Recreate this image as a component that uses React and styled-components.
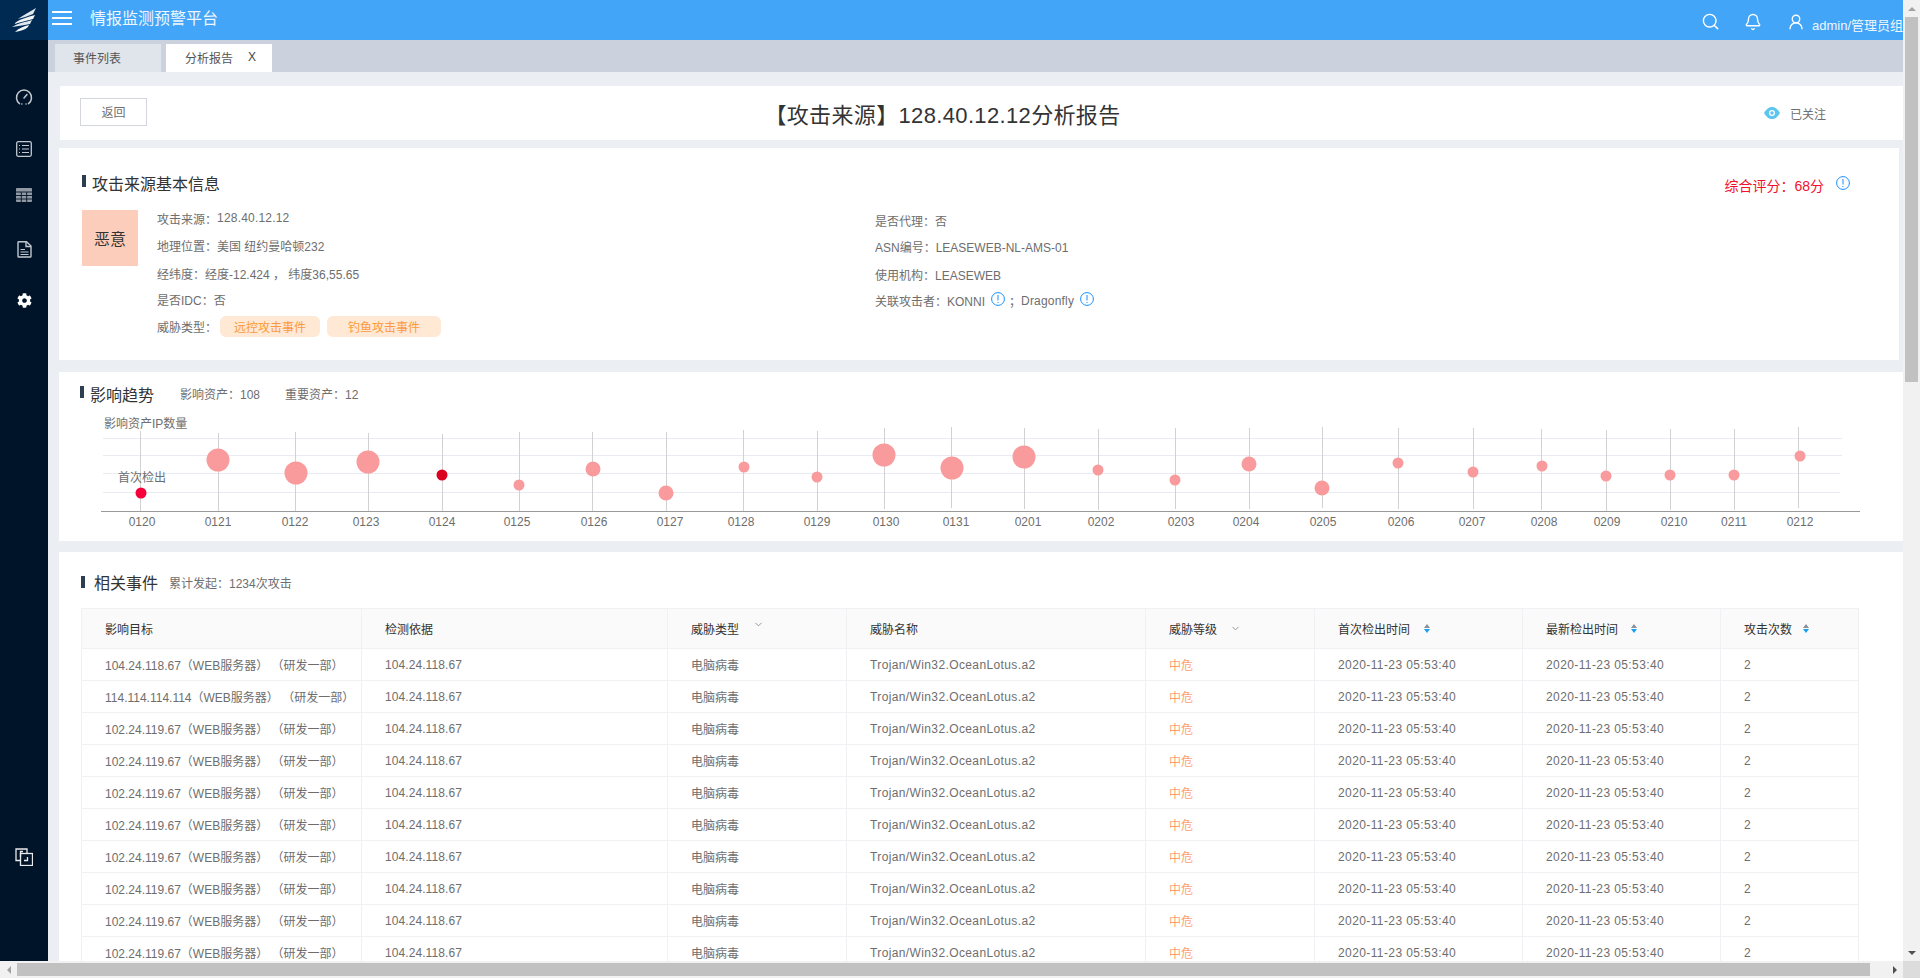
import React from "react";
import styled, { createGlobalStyle } from "styled-components";
import { FaCog } from "react-icons/fa";
import { Bell, ChevronDown, Search, UserRound } from "lucide-react";

const GlobalStyle = createGlobalStyle`
  html, body { margin: 0; height: 100%; overflow: hidden; }
  body {
    font-family: "Liberation Sans", "Noto Sans CJK SC", sans-serif;
    font-size: 12px;
    color: #6e6e6e;
  }
  * { box-sizing: border-box; }
`;

const Shell = styled.div`
  display: grid;
  grid-template-columns: 1fr 17px;
  grid-template-rows: 1fr 17px;
  width: 1920px;
  height: 978px;
  overflow: hidden;
`;
const Viewport = styled.div`
  display: flex;
  min-width: 0;
  min-height: 0;
  overflow: hidden;
`;

const Sidebar = styled.aside`
  flex: 0 0 48px;
  display: flex;
  flex-direction: column;
  align-items: center;
  background: #001429;
`;
const LogoBox = styled.div`
  width: 48px;
  height: 40px;
  flex: none;
  display: flex;
  align-items: center;
  justify-content: center;
  background: #012a52;
`;
const SideItem = styled.div`
  height: ${(p) => p.$h}px;
  flex: none;
  display: flex;
  align-items: flex-end;
  color: #c3c8ce;
`;

const Main = styled.div`
  flex: 1;
  min-width: 0;
  display: flex;
  flex-direction: column;
  background: #ebeef3;
`;
const Header = styled.header`
  height: 40px;
  flex: none;
  display: flex;
  align-items: center;
  padding-left: 4px;
  background: #42a5f8;
  color: #fff;
`;
const Burger = styled.div`
  width: 20px;
  height: 14px;
  margin-top: -4px;
  border-top: 2px solid #fff;
  border-bottom: 2px solid #fff;
  position: relative;
  &::after {
    content: "";
    position: absolute;
    left: 0;
    right: 0;
    top: 4px;
    height: 2px;
    background: #fff;
  }
`;
const AppTitle = styled.div`
  margin: -6px 0 0 18px;
  font-size: 16px;
  color: #eef6fe;
`;
const HeaderRight = styled.div`
  margin-left: auto;
  display: flex;
  align-items: center;
  margin-top: 3px;
`;
const HeadIcon = styled.span`
  display: flex;
  margin-left: ${(p) => p.$ml}px;
`;
const UserName = styled.span`
  margin: 5px 0 0 7px;
  font-size: 13px;
  color: #eef6fe;
  white-space: nowrap;
`;

const TabBar = styled.div`
  height: 32px;
  flex: none;
  display: flex;
  align-items: flex-end;
  gap: 5px;
  padding-left: 7px;
  background: #cbd2de;
`;
const Tab = styled.div`
  width: 106px;
  height: 28px;
  display: flex;
  align-items: center;
  padding: 0 0 2px ${(p) => (p.$active ? 19 : 18)}px;
  background: ${(p) => (p.$active ? "#fff" : "#e0e4eb")};
  color: #555;
`;
const TabClose = styled.span`
  margin-left: 15px;
  color: #444;
`;

const Content = styled.div`
  flex: 1;
  min-height: 0;
  overflow: hidden;
  padding: 14px 0 0 12px;
`;
const TitleCard = styled.section`
  height: 54px;
  display: flex;
  align-items: center;
  padding: 0 77px 0 20px;
  background: #fff;
`;
const BackButton = styled.button`
  width: 67px;
  height: 28px;
  margin-top: -2px;
  padding: 0 0 2px;
  border: 1px solid #d3d6db;
  background: #fff;
  color: #6e6e6e;
  font: inherit;
`;
const ReportTitle = styled.h1`
  flex: 1;
  margin: 0;
  padding-right: 26px;
  text-align: center;
  font-size: 22px;
  font-weight: 400;
  letter-spacing: 0.35px;
  color: #333;
`;
const Followed = styled.div`
  display: flex;
  align-items: center;
  gap: 10px;
`;

const InfoCard = styled.section`
  height: 212px;
  margin: 8px 4px 0 -1px;
  background: #fff;
`;
const InfoHead = styled.div`
  display: flex;
  align-items: flex-start;
  padding: 27px 49px 0 23px;
`;
const Marker = styled.i`
  flex: none;
  width: 4px;
  height: 12px;
  margin-top: ${(p) => p.$top}px;
  background: #2c3e50;
`;
const SectionTitle = styled.h2`
  margin: 0 0 0 ${(p) => p.$gap}px;
  font-size: 16px;
  line-height: 20px;
  font-weight: 400;
  color: #333;
  white-space: nowrap;
`;
const Score = styled.div`
  margin-left: auto;
  display: flex;
  align-items: flex-start;
  gap: 12px;
  font-size: 14px;
  line-height: 20px;
  padding-top: 1px;
  color: #f2102c;
`;
const ScoreIcon = styled.span`
  display: flex;
`;
const InfoBody = styled.div`
  display: grid;
  grid-template-columns: 56px 718px 1fr;
  column-gap: 19px;
  margin-top: 7px;
  padding-left: 23px;
`;
const Level = styled.div`
  width: 56px;
  height: 56px;
  margin-top: 7px;
  display: flex;
  align-items: center;
  justify-content: center;
  background: #fdcdbb;
  color: #333;
  font-size: 16px;
`;
const InfoCol = styled.div`
  padding-top: ${(p) => p.$top}px;
  margin-left: ${(p) => p.$ml || 0}px;
`;
const InfoRow = styled.div`
  height: ${(p) => p.$h}px;
  display: flex;
  align-items: center;
  white-space: nowrap;
`;
const Num = styled.span`
  letter-spacing: 0.2px;
`;
const Tag = styled.span`
  height: 21px;
  display: inline-flex;
  align-items: center;
  justify-content: center;
  width: ${(p) => p.$w}px;
  margin-left: ${(p) => p.$ml}px;
  border-radius: 6px;
  background: #ffe8d4;
  color: #fb9a3c;
`;
const InlineIcon = styled.span`
  display: flex;
  margin: -4px ${(p) => p.$mr}px 0 6px;
`;

const TrendCard = styled.section`
  height: 169px;
  margin: 12px 0 0 -1px;
  background: #fff;
`;
const TrendHead = styled.div`
  display: flex;
  align-items: flex-start;
  padding: 14px 0 0 21px;
  margin-bottom: -1px;
`;
const HeadNote = styled.span`
  margin: ${(p) => p.$top || 0}px 0 0 ${(p) => p.$ml}px;
  line-height: 18px;
  white-space: nowrap;
`;
const ChartSvg = styled.svg`
  display: block;
  width: 1844px;
  height: 136px;
  font-family: "Liberation Sans", "Noto Sans CJK SC", sans-serif;
  font-size: 12px;
`;

const EventsCard = styled.section`
  margin: 11px 0 0 -1px;
  background: #fff;
`;
const EventsHead = styled.div`
  display: flex;
  align-items: flex-start;
  height: 42px;
  padding: 22px 0 0 22px;
`;
const TableWrap = styled.div`
  margin: 14px 0 0 22px;
`;
const Table = styled.table`
  width: 1777px;
  table-layout: fixed;
  border-collapse: collapse;
`;
const Th = styled.th`
  height: 40px;
  padding: 0 0 0 23px;
  border: 1px solid #f0f0f5;
  background: #fafafa;
  color: #333;
  font-weight: 400;
  text-align: left;
  white-space: nowrap;
`;
const Td = styled.td`
  height: 32px;
  padding: 0 0 0 23px;
  border: 1px solid #f0f0f5;
  color: ${(p) => p.$color || "#6e6e6e"};
  letter-spacing: ${(p) => p.$ls || 0}px;
  white-space: nowrap;
`;
const HeadInner = styled.span`
  display: inline-flex;
  align-items: center;
`;
const Chevron = styled.span`
  display: flex;
  color: #8a8f99;
  margin: ${(p) => (p.$up ? "-9px 0 0 14px" : "0 0 0 13px")};
`;
const Sort = styled.span`
  display: inline-flex;
  flex-direction: column;
  gap: 1px;
  margin-left: ${(p) => p.$ml}px;
  &::before, &::after {
    content: "";
    border-left: 3px solid transparent;
    border-right: 3px solid transparent;
  }
  &::before { border-bottom: 4px solid #8a8f99; }
  &::after { border-top: 4px solid #1aa0f0; }
`;

const VBar = styled.div`
  display: flex;
  flex-direction: column;
  background: #f1f1f1;
`;
const HBar = styled.div`
  display: flex;
  background: #f1f1f1;
`;
const Corner = styled.div`
  background: #dcdcdc;
`;
const ArrowBox = styled.div`
  flex: 0 0 17px;
  display: flex;
  align-items: center;
  justify-content: center;
`;
const Arrow = styled.i`
  width: 0;
  height: 0;
  border-style: solid;
  border-color: transparent;
  ${(p) => p.$dir === "up" && "border-width: 0 4px 4px; border-bottom-color: #a3a3a3;"}
  ${(p) => p.$dir === "down" && "border-width: 4px 4px 0; border-top-color: #505050;"}
  ${(p) => p.$dir === "left" && "border-width: 4px 4px 4px 0; border-right-color: #a3a3a3;"}
  ${(p) => p.$dir === "right" && "border-width: 4px 0 4px 4px; border-left-color: #505050;"}
`;
const VThumb = styled.div`
  height: 365px;
  margin: 0 2px;
  background: #c1c1c1;
`;
const VRest = styled.div`
  flex: 1;
`;
const HThumb = styled.div`
  flex: 1;
  margin: 2px 16px 2px 0;
  background: #c1c1c1;
`;

const Logo = () => (
  <svg width="26" height="26" viewBox="0 0 26 26">
    <path d="M25 1 C19 5 12 8 7 12 C11 11 17 9 22 7 Z" fill="#dfe6ee" />
    <path d="M24 8 C17 10 8 12 3 17 C9 15 16 14 22 12 Z" fill="#f2f5f8" />
    <path d="M21 13 C15 15 7 16 1 20 C8 19 14 18 19 17 Z" fill="#dfe6ee" />
    <path d="M18 18 C13 19 8 21 4 25 C9 24 14 23 17 20 Z" fill="#f2f5f8" />
  </svg>
);
const GaugeIcon = () => (
  <svg width="18" height="18" viewBox="0 0 18 18" fill="none" stroke="currentColor" strokeWidth="1.5" strokeLinecap="round">
    <path d="M4.5 15.6 A7.5 7.5 0 1 1 13.5 15.6" />
    <path d="M9 10 L12 6.5" />
    <path d="M6.8 16 h0.1 M11 16 h0.1" />
  </svg>
);
const ListIcon = () => (
  <svg width="16" height="16" viewBox="0 0 16 16" fill="none" stroke="currentColor">
    <rect x="0.7" y="0.7" width="14.6" height="14.6" rx="1.5" strokeWidth="1.3" />
    <path d="M3 4.5 h1 M6 4.5 h7 M3 8 h1 M6 8 h7 M3 11.5 h1 M6 11.5 h7" strokeWidth="1.1" />
  </svg>
);
const GridIcon = () => (
  <svg width="16" height="14" viewBox="0 0 16 14">
    <rect width="16" height="14" rx="1" fill="#8f98a3" />
    <path d="M0 4 H16 M0 7.5 H16 M0 11 H16 M5.3 4 V14 M10.7 4 V14" stroke="#001429" strokeWidth="0.9" />
  </svg>
);
const DocIcon = () => (
  <svg width="15" height="17" viewBox="0 0 15 17" fill="none" stroke="currentColor" strokeWidth="1.4">
    <path d="M1 1.5 Q1 0.8 1.8 0.8 H9.5 L14 5 V15.2 Q14 16 13.2 16 H1.8 Q1 16 1 15.2 Z" />
    <path d="M9 1 V5.5 H14" />
    <path d="M3.5 8.5 H8 M3.5 11 H11.5 M3.5 13.5 H11.5" strokeWidth="1.1" />
  </svg>
);
const CopyIcon = () => (
  <svg width="18" height="18" viewBox="0 0 18 18" fill="none" stroke="#e8eaee" strokeWidth="1.3">
    <path d="M5.5 12.5 H1 V1 H12 V5.5" />
    <rect x="5.5" y="5.5" width="12" height="12" />
    <path d="M8 3.5 H5.5 V9 M9 12.5 H12.5 V9" />
  </svg>
);
const EyeIcon = () => (
  <svg width="16" height="12" viewBox="0 0 16 12">
    <path d="M0 6 C3 1 5.5 0 8 0 C10.5 0 13 1 16 6 C13 11 10.5 12 8 12 C5.5 12 3 11 0 6 Z" fill="#5cc6ee" />
    <circle cx="8" cy="6" r="3" fill="#fff" />
    <circle cx="8" cy="6" r="1.7" fill="#5cc6ee" />
  </svg>
);
const InfoIcon = () => (
  <svg width="14" height="14" viewBox="0 0 14 14" fill="none" stroke="#1890ff">
    <circle cx="7" cy="7" r="6.4" />
    <path d="M7 3 V8.5 M7 10 V11" />
  </svg>
);

// date, label x, stem x, stem top, stem bottom, dot x, dot y, dot size, colour
const PINK = "#f99b9d";
const points = [
  ["0120", 142, 140, 431, 511, 141, 493, 11, "#f5003a"],
  ["0121", 218, 218, 433, 511, 218, 460, 23, PINK],
  ["0122", 295, 295, 432, 511, 296, 473, 23, PINK],
  ["0123", 366, 368, 433, 511, 368, 462, 23, PINK],
  ["0124", 442, 442, 434, 511, 442, 475, 11, "#dc0020"],
  ["0125", 517, 519, 432, 511, 519, 485, 11, PINK],
  ["0126", 594, 592, 432, 511, 593, 469, 15, PINK],
  ["0127", 670, 666, 432, 511, 666, 493, 15, PINK],
  ["0128", 741, 743, 430, 511, 744, 467, 11, PINK],
  ["0129", 817, 817, 431, 511, 817, 477, 11, PINK],
  ["0130", 886, 884, 428, 509, 884, 455, 23, PINK],
  ["0131", 956, 951, 427, 508, 952, 468, 23, PINK],
  ["0201", 1028, 1024, 428, 509, 1024, 457, 23, PINK],
  ["0202", 1101, 1098, 429, 510, 1098, 470, 11, PINK],
  ["0203", 1181, 1175, 428, 509, 1175, 480, 11, PINK],
  ["0204", 1246, 1249, 428, 509, 1249, 464, 15, PINK],
  ["0205", 1323, 1322, 427, 508, 1322, 488, 15, PINK],
  ["0206", 1401, 1398, 428, 509, 1398, 463, 11, PINK],
  ["0207", 1472, 1473, 428, 509, 1473, 472, 11, PINK],
  ["0208", 1544, 1541, 429, 510, 1542, 466, 11, PINK],
  ["0209", 1607, 1606, 430, 511, 1606, 476, 11, PINK],
  ["0210", 1674, 1670, 429, 510, 1670, 475, 11, PINK],
  ["0211", 1734, 1734, 429, 510, 1734, 475, 11, PINK],
  ["0212", 1800, 1798, 427, 508, 1800, 456, 11, PINK],
];

const Chart = () => (
  <ChartSvg viewBox="59 405 1844 136">
    <text x="104" y="428" fill="#6e6e6e">影响资产IP数量</text>
    <g stroke="#e9ebf3" strokeWidth="1">
      <line x1="103" y1="438.5" x2="1842" y2="438.5" />
      <line x1="103" y1="455.5" x2="1842" y2="455.5" />
      <line x1="103" y1="473.5" x2="1840" y2="473.5" />
      <line x1="103" y1="492.5" x2="1840" y2="492.5" />
    </g>
    {points.map(([date, lx, sx, top, bottom, cx, cy, d, color]) => (
      <g key={date}>
        <line x1={sx + 0.5} y1={top} x2={sx + 0.5} y2={bottom} stroke="#d2d2d2" />
        <circle cx={cx} cy={cy} r={d / 2} fill={color} />
        <text x={lx} y="526" textAnchor="middle" fill="#6e6e6e">{date}</text>
      </g>
    ))}
    <line x1="101" y1="511.5" x2="1860" y2="511.5" stroke="#999" />
    <text x="118" y="482" fill="#6e6e6e">首次检出</text>
  </ChartSvg>
);

const colWidths = [280, 306, 179, 299, 169, 208, 198, 138];
const rows = [
  "104.24.118.67（WEB服务器）\u00a0（研发一部）",
  "114.114.114.114（WEB服务器）\u00a0（研发一部）",
  ...Array(8).fill("102.24.119.67（WEB服务器）\u00a0（研发一部）"),
];

export default function App() {
  return (
    <Shell>
      <GlobalStyle />
      <Viewport>
        <Sidebar>
          <LogoBox><Logo /></LogoBox>
          <SideItem $h={66}><GaugeIcon /></SideItem>
          <SideItem $h={51}><ListIcon /></SideItem>
          <SideItem $h={45}><GridIcon /></SideItem>
          <SideItem $h={56}><DocIcon /></SideItem>
          <SideItem $h={50}><FaCog size={15} color="#fff" /></SideItem>
          <SideItem $h={558}><CopyIcon /></SideItem>
        </Sidebar>
        <Main>
          <Header>
            <Burger />
            <AppTitle>情报监测预警平台</AppTitle>
            <HeaderRight>
              <HeadIcon><Search size={19} strokeWidth={1.8} /></HeadIcon>
              <HeadIcon $ml={24}><Bell size={18} strokeWidth={1.8} /></HeadIcon>
              <HeadIcon $ml={25}><UserRound size={18} strokeWidth={1.8} /></HeadIcon>
              <UserName>admin/管理员组</UserName>
            </HeaderRight>
          </Header>
          <TabBar>
            <Tab>事件列表</Tab>
            <Tab $active>分析报告<TabClose>X</TabClose></Tab>
          </TabBar>
          <Content>
            <TitleCard>
              <BackButton>返回</BackButton>
              <ReportTitle>【攻击来源】128.40.12.12分析报告</ReportTitle>
              <Followed><EyeIcon />已关注</Followed>
            </TitleCard>

            <InfoCard>
              <InfoHead>
                <Marker $top={0} />
                <SectionTitle $gap={6}>攻击来源基本信息</SectionTitle>
                <Score>
                  综合评分：68分
                  <ScoreIcon><InfoIcon /></ScoreIcon>
                </Score>
              </InfoHead>
              <InfoBody>
                <Level>恶意</Level>
                <InfoCol $top={1}>
                  <InfoRow $h={28}>攻击来源：<Num>128.40.12.12</Num></InfoRow>
                  <InfoRow $h={27}>地理位置：美国 纽约曼哈顿232</InfoRow>
                  <InfoRow $h={29}>经纬度：经度-12.424 ， 纬度36,55.65</InfoRow>
                  <InfoRow $h={22}>是否IDC：否</InfoRow>
                  <InfoRow $h={32}>
                    威胁类型：
                    <Tag $w={100} $ml={3}>远控攻击事件</Tag>
                    <Tag $w={114} $ml={7}>钓鱼攻击事件</Tag>
                  </InfoRow>
                </InfoCol>
                <InfoCol $top={3} $ml={-19}>
                  <InfoRow $h={28}>是否代理：否</InfoRow>
                  <InfoRow $h={24}>ASN编号：LEASEWEB-NL-AMS-01</InfoRow>
                  <InfoRow $h={33}>使用机构：LEASEWEB</InfoRow>
                  <InfoRow $h={19}>
                    关联攻击者：KONNI
                    <InlineIcon $mr={4}><InfoIcon /></InlineIcon>
                    ；<Num>Dragonfly</Num>
                    <InlineIcon $mr={0}><InfoIcon /></InlineIcon>
                  </InfoRow>
                </InfoCol>
              </InfoBody>
            </InfoCard>

            <TrendCard>
              <TrendHead>
                <Marker $top={0} />
                <SectionTitle $gap={6}>影响趋势</SectionTitle>
                <HeadNote $ml={26}>影响资产：108</HeadNote>
                <HeadNote $ml={25}>重要资产：12</HeadNote>
              </TrendHead>
              <Chart />
            </TrendCard>

            <EventsCard>
              <EventsHead>
                <Marker $top={2} />
                <SectionTitle $gap={9}>相关事件</SectionTitle>
                <HeadNote $ml={11} $top={1}>累计发起：1234次攻击</HeadNote>
              </EventsHead>
              <TableWrap>
                <Table>
                  <colgroup>
                    {colWidths.map((w, i) => <col key={i} width={w} />)}
                  </colgroup>
                  <thead>
                    <tr>
                      <Th>影响目标</Th>
                      <Th>检测依据</Th>
                      <Th><HeadInner>威胁类型<Chevron $up><ChevronDown size={11} /></Chevron></HeadInner></Th>
                      <Th>威胁名称</Th>
                      <Th><HeadInner>威胁等级<Chevron><ChevronDown size={11} /></Chevron></HeadInner></Th>
                      <Th><HeadInner>首次检出时间<Sort $ml={14} /></HeadInner></Th>
                      <Th><HeadInner>最新检出时间<Sort $ml={13} /></HeadInner></Th>
                      <Th><HeadInner>攻击次数<Sort $ml={11} /></HeadInner></Th>
                    </tr>
                  </thead>
                  <tbody>
                    {rows.map((target, i) => (
                      <tr key={i}>
                        <Td>{target}</Td>
                        <Td $ls={0.08}>104.24.118.67</Td>
                        <Td>电脑病毒</Td>
                        <Td $ls={0.38}>Trojan/Win32.OceanLotus.a2</Td>
                        <Td $color="#fda26f">中危</Td>
                        <Td $ls={0.4}>2020-11-23 05:53:40</Td>
                        <Td $ls={0.4}>2020-11-23 05:53:40</Td>
                        <Td>2</Td>
                      </tr>
                    ))}
                  </tbody>
                </Table>
              </TableWrap>
            </EventsCard>
          </Content>
        </Main>
      </Viewport>
      <VBar>
        <ArrowBox><Arrow $dir="up" /></ArrowBox>
        <VThumb />
        <VRest />
        <ArrowBox><Arrow $dir="down" /></ArrowBox>
      </VBar>
      <HBar>
        <ArrowBox><Arrow $dir="left" /></ArrowBox>
        <HThumb />
        <ArrowBox><Arrow $dir="right" /></ArrowBox>
      </HBar>
      <Corner />
    </Shell>
  );
}
